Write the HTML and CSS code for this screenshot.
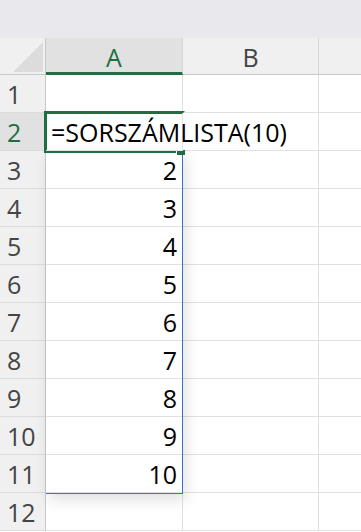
FILE: index.html
```html
<!DOCTYPE html>
<html lang="hu">
<head>
  <meta charset="UTF-8" />
  <title>SORSZÁMLISTA</title>
  <link rel="stylesheet" href="styles.css">
</head>
<body>

<div class="ribbon"></div>

<div class="sheet">
  <!-- header row -->
  <div class="corner"><div class="tri"></div></div>
  <div class="colhead active">A</div>
  <div class="colhead">B</div>
  <div class="colhead last"></div>

  <div class="rowhead">1</div><div class="cell"></div><div class="cell"></div><div class="cell last"></div>
  <div class="rowhead active">2</div><div class="cell formula">=SORSZÁMLISTA(10)</div><div class="cell"></div><div class="cell last"></div>
  <div class="rowhead">3</div><div class="cell num">2</div><div class="cell"></div><div class="cell last"></div>
  <div class="rowhead">4</div><div class="cell num">3</div><div class="cell"></div><div class="cell last"></div>
  <div class="rowhead">5</div><div class="cell num">4</div><div class="cell"></div><div class="cell last"></div>
  <div class="rowhead">6</div><div class="cell num">5</div><div class="cell"></div><div class="cell last"></div>
  <div class="rowhead">7</div><div class="cell num">6</div><div class="cell"></div><div class="cell last"></div>
  <div class="rowhead">8</div><div class="cell num">7</div><div class="cell"></div><div class="cell last"></div>
  <div class="rowhead">9</div><div class="cell num">8</div><div class="cell"></div><div class="cell last"></div>
  <div class="rowhead">10</div><div class="cell num">9</div><div class="cell"></div><div class="cell last"></div>
  <div class="rowhead">11</div><div class="cell num">10</div><div class="cell"></div><div class="cell last"></div>
  <div class="rowhead">12</div><div class="cell"></div><div class="cell"></div><div class="cell last"></div>

  <!-- spill range + active cell -->
  <div class="spill"></div>
  <div class="selection"><div class="handle"></div></div>
</div>

</body>
</html>
```

FILE: styles.css
```css
body {
  margin: 0;
  background: #fff;
  font-family: "Open Sans", "Liberation Sans", sans-serif;
  overflow: hidden;
}
.ribbon {
  height: 38px;
  background: #e9e8ed;
}
.sheet {
  position: relative;
  display: grid;
  grid-template-columns: 46px 137px 136px 1fr;
  grid-template-rows: 37px repeat(12, 38px);
}
.corner, .colhead, .rowhead {
  background: #f0f0f0;
  color: #444;
  font-size: 25px;
  display: flex;
  align-items: center;
  justify-content: center;
  box-sizing: border-box;
}
.corner {
  border-right: 1px solid #c8c8c8;
  border-bottom: 1px solid #c8c8c8;
  position: relative;
}
.tri {
  position: absolute;
  left: 13px;
  top: 4px;
  width: 0;
  height: 0;
  border-left: 30px solid transparent;
  border-bottom: 30px solid #dcdcdc;
}
.colhead {
  border-right: 1px solid #d6d6d6;
  border-bottom: 1px solid #c8c8c8;
  padding-top: 2px;
}
.colhead.last { border-right: none; }
.colhead.active {
  background: #e1e1e1;
  color: #1e6e42;
  border-bottom: 3px solid #1e6e42;
  padding-top: 4px;
}
.rowhead {
  border-right: 1px solid #c8c8c8;
  border-bottom: 1px solid #dcdcdc;
  justify-content: flex-start;
  padding-left: 7px;
}
.rowhead.active {
  background: #e1e1e1;
  color: #1e6e42;
}
.cell {
  border-right: 1px solid #e1e1e1;
  border-bottom: 1px solid #e1e1e1;
  font-size: 25px;
  color: #000;
  display: flex;
  align-items: center;
  white-space: nowrap;
  box-sizing: border-box;
  padding: 0 5px;
}
.cell.last { border-right: none; }
.cell.num { justify-content: flex-end; }
.cell.formula {
  overflow: visible;
  padding-left: 5px;
  position: relative;
  z-index: 4;
}
.spill {
  position: absolute;
  left: 46px;
  top: 113px;
  width: 137px;
  height: 343px;
  box-sizing: border-box;
  border: 1px solid #3a6fd8;
  border-left: none;
  box-shadow: 3px 6px 14px rgba(0, 0, 0, 0.12);
  z-index: 1;
}
.selection {
  position: absolute;
  left: 44px;
  top: 73px;
  width: 141px;
  height: 42px;
  box-sizing: border-box;
  border: 3px solid #1e6e42;
  border-right-color: transparent;
  z-index: 3;
}
.handle {
  position: absolute;
  right: -3px;
  bottom: -5px;
  width: 8px;
  height: 5px;
  background: #1e6e42;
  border-left: 1px solid #fff;
  border-top: 1px solid #fff;
}
```
